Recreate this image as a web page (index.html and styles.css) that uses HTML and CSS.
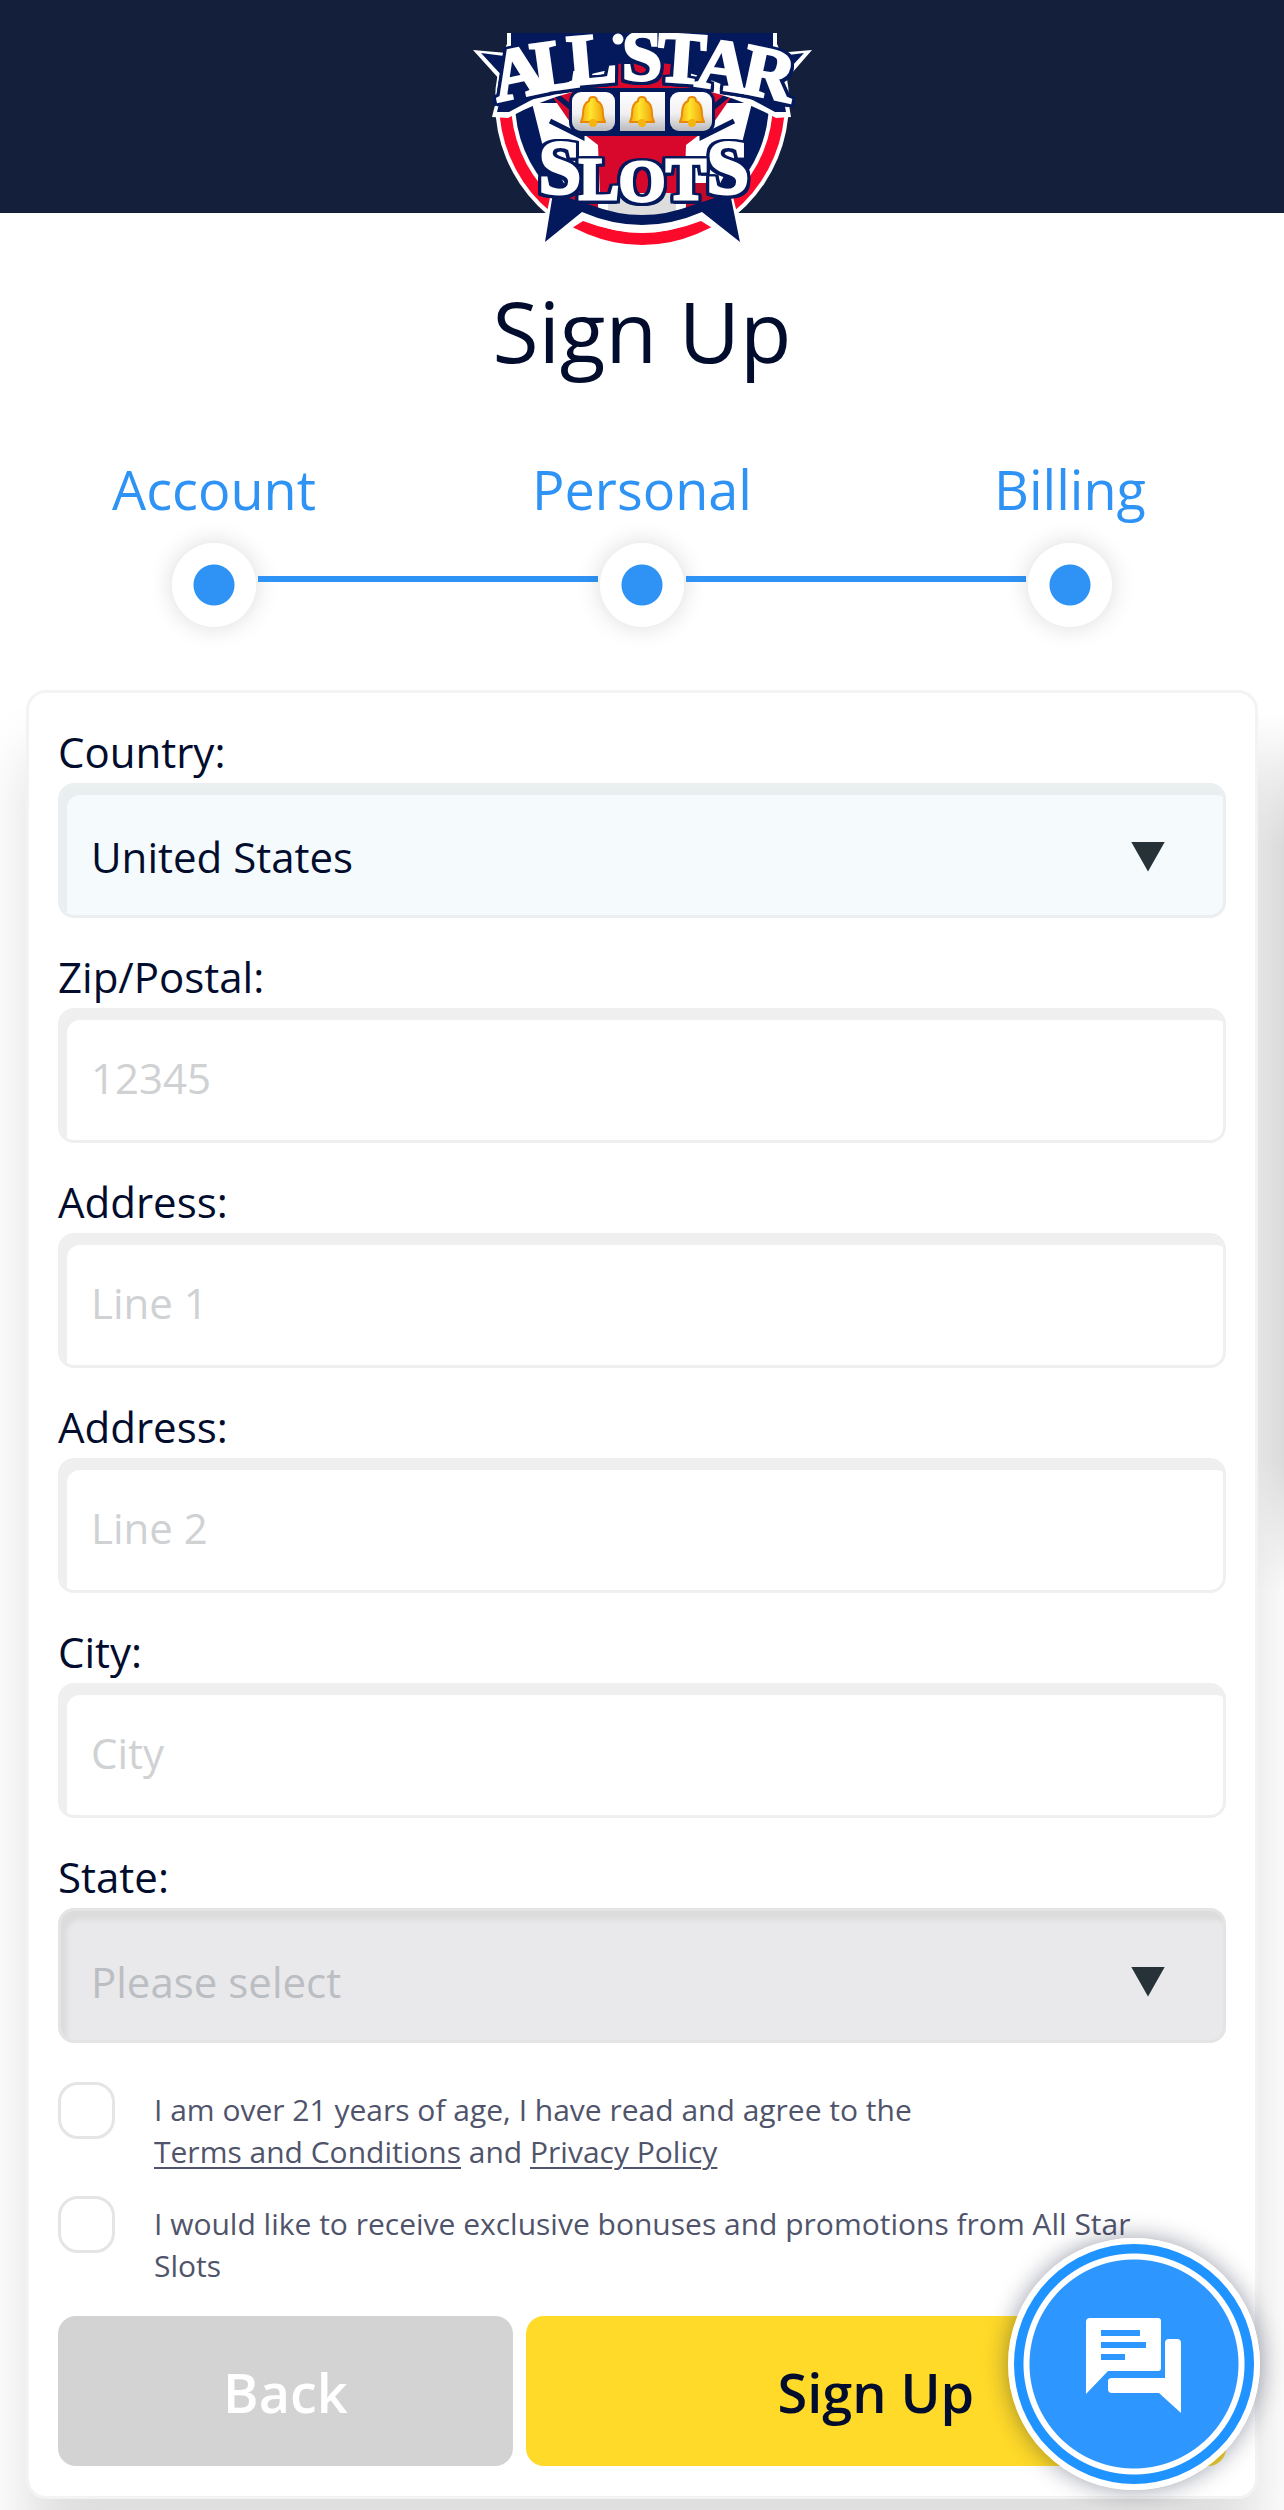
FILE: index.html
```html
<!DOCTYPE html>
<html lang="en">
<head>
<meta charset="utf-8">
<meta name="viewport" content="width=device-width, initial-scale=1">
<title>Sign Up - All Star Slots</title>
<link rel="stylesheet" href="styles.css">
</head>
<body>
<header class="topbar">
  <a class="logo" href="#" aria-label="All Star Slots">
    <svg viewBox="0 0 344 218" width="344" height="218">
      <defs>
        <linearGradient id="reel" x1="0" y1="0" x2="0" y2="1"><stop offset="0" stop-color="#fff"/><stop offset=".55" stop-color="#f1f1f3"/><stop offset="1" stop-color="#b9b9bd"/></linearGradient>
        <linearGradient id="gold" x1="0" y1="0" x2="1" y2="0"><stop offset="0" stop-color="#f6a80c"/><stop offset=".4" stop-color="#ffe62e"/><stop offset="1" stop-color="#f09a08"/></linearGradient>
        <g id="bell"><path d="M0-16c3 0 4 2 4 4 5 2 6 7 6 13 0 5 2 6 2 8H-12c0-2 2-3 2-8 0-6 1-11 6-13 0-2 1-4 4-4z" fill="url(#gold)" stroke="#e8890a" stroke-width="2"/><circle cy="10" r="4" fill="#f5b50e"/></g>
      </defs>
      <circle cx="172" cy="69" r="147" fill="#fff"/>
      <circle cx="172" cy="69" r="143" fill="#fb0a2c"/>
      <circle cx="172" cy="69" r="131" fill="#fff"/>
      <circle cx="172" cy="69" r="127" fill="#04195c"/>
      <path d="M62 70L72 110 108 176 172 186 236 176 272 110 282 70z" fill="#fff"/>
      <path d="M80 60L102 92 128 112 130 165H214L216 112 242 92 264 60 226 0H118z" fill="#d8082c"/>
      <path d="M86 62L112 84V104L80 88M258 62L232 84V104L264 88" fill="none" stroke="#04195c" stroke-width="5"/>
      <path d="M96 150H128V182L96 190zM248 150H216V182L248 190z" fill="#c00a2a"/>
      <path d="M138 160H206V184Q172 196 138 184z" fill="#ddd"/>
      <path d="M3 17L37 20V0H307V20L342 17 315 48 321 84 306 85Q242 50 172 50 102 50 38 85L22 84 31 48z" fill="#fff"/>
      <path d="M11 20L41 24V0H303V24L334 20 310 46 316 79 305 79 262 56Q216 34 172 34 128 34 82 56L39 79 27 79 35 46z" fill="#04195c"/>
      <path d="M142 32Q172 26 206 32V56H142z" fill="#d8082c"/>
      <rect x="99" y="55" width="146" height="48" rx="14" fill="#04195c"/>
      <rect x="102" y="59" width="43" height="39" rx="9" fill="url(#reel)"/>
      <rect x="150" y="59" width="45" height="39" fill="url(#reel)"/>
      <rect x="200" y="59" width="42" height="39" rx="9" fill="url(#reel)"/>
      <use href="#bell" x="123" y="80"/><use href="#bell" x="172" y="80"/><use href="#bell" x="222" y="80"/>
      <path d="M81 160L69 216 113 188Q172 211 231 188L276 216 262 160 223 174Q172 192 121 174z" fill="#fff"/>
      <path d="M83 160L75 209 112 179Q172 205 232 179L270 209 260 160 223 172Q172 192 121 172z" fill="#04195c"/>
      <g class="logo-word">
        <text x="53" y="63" transform="rotate(-12 53 63)">A</text><text x="89" y="56" transform="rotate(-8 89 56)">L</text><text x="124" y="50" transform="rotate(-5 124 50)">L</text><text class="dot" x="148" y="22">·</text><text x="172" y="47">S</text><text x="210" y="49" transform="rotate(4 210 49)">T</text><text x="250" y="56" transform="rotate(8 250 56)">A</text><text x="294" y="64" transform="rotate(12 294 64)">R</text>
      </g>
      <g class="logo-word logo-slots">
        <text class="outer" x="90" y="160">S</text><text x="129" y="166">L</text><text x="172" y="168">O</text><text x="216" y="166">T</text><text class="outer" x="258" y="160">S</text>
      </g>
    </svg>
  </a>
</header>
<main>
  <h1 class="title">Sign Up</h1>
  <ol class="steps">
    <li>Account</li>
    <li>Personal</li>
    <li>Billing</li>
  </ol>
  <form class="card">
    <div class="field">
      <label for="country">Country:</label>
      <div class="picker"><select id="country" class="control"><option>United States</option></select></div>
    </div>
    <div class="field">
      <label for="zip">Zip/Postal:</label>
      <input id="zip" class="control" type="text" placeholder="12345">
    </div>
    <div class="field">
      <label for="line1">Address:</label>
      <input id="line1" class="control" type="text" placeholder="Line 1">
    </div>
    <div class="field">
      <label for="line2">Address:</label>
      <input id="line2" class="control" type="text" placeholder="Line 2">
    </div>
    <div class="field">
      <label for="city">City:</label>
      <input id="city" class="control" type="text" placeholder="City">
    </div>
    <div class="field">
      <label for="state">State:</label>
      <div class="picker"><select id="state" class="control empty"><option>Please select</option></select></div>
    </div>
    <div class="consent">
      <input type="checkbox" id="terms">
      <label for="terms">I am over 21 years of age, I have read and agree to the<br><a href="#">Terms and Conditions</a> and <a href="#">Privacy Policy</a></label>
    </div>
    <div class="consent">
      <input type="checkbox" id="promos">
      <label for="promos">I would like to receive exclusive bonuses and promotions from All Star Slots</label>
    </div>
    <div class="actions">
      <button type="button" class="back">Back</button>
      <button type="submit" class="submit">Sign Up</button>
    </div>
  </form>
</main>
<button type="button" class="chat" aria-label="Chat">
  <svg viewBox="0 0 96 96" width="96" height="96">
    <path d="M4 0H72Q75 0 75 3V50Q75 53 72 53H22L0 76V4Q0 0 4 0z" fill="#fff"/>
    <path d="M15 12H54V18H15zM15 24H60V30H15zM15 36H39V42H15z" fill="#2e97ff"/>
    <path d="M83 21H91Q95 21 95 25V95L73 75H26Q22 75 22 71V63Q22 60 26 60H79V25Q79 21 83 21z" fill="#fff"/>
  </svg>
</button>
</body>
</html>
```
FILE: styles.css
```css
* {
  box-sizing: border-box;
}

body {
  margin: 0;
  background: #fff;
  color: #020d2e;
  font-family: "Open Sans", sans-serif;
}

.topbar {
  display: flex;
  justify-content: center;
  height: 213px;
  padding-top: 33px;
  background: #141f3b;
}

.logo {
  position: relative;
  z-index: 1;
  height: 218px;
}

.logo svg {
  display: block;
}

.logo-word {
  font: bold 72px "Liberation Serif", serif;
  fill: #fff;
  stroke: #fff;
  stroke-width: 3px;
  text-anchor: middle;
  filter: drop-shadow(3px 0 #04195c) drop-shadow(-3px 0 #04195c) drop-shadow(0 3px #04195c) drop-shadow(0 -2px #04195c);
}

.logo-word .dot {
  font-size: 48px;
}

.logo-slots {
  font-size: 60px;
}

.logo-slots .outer {
  font-size: 76px;
}

main {
  position: relative;
  padding-bottom: 11px;
  overflow: hidden;
}

/* Soft shade along the right edge of the window */
main::before {
  content: "";
  position: absolute;
  top: 500px;
  right: 0;
  width: 26px;
  height: 880px;
  background: linear-gradient(to left, rgba(0, 0, 0, 0.12), rgba(0, 0, 0, 0.04));
  mask-image: linear-gradient(transparent, #000 15%, #000 85%, transparent);
}

.title {
  margin: 61px 0 0;
  font-size: 84px;
  font-weight: 400;
  line-height: 114px;
  text-align: center;
}

.steps {
  display: grid;
  grid-template-columns: repeat(3, 1fr);
  margin: 64px 0 0;
  padding: 0;
  list-style: none;
  color: #2e93f5;
  font-size: 54px;
  line-height: 74px;
}

.steps li {
  position: relative;
  display: flex;
  flex-direction: column;
  align-items: center;
  gap: 17px;
}

.steps li::after {
  content: "";
  width: 84px;
  height: 84px;
  border-radius: 50%;
  background: radial-gradient(circle, #2e93f5 20px, #fff 21px);
  box-shadow: 0 0 24px rgba(0, 0, 0, 0.15);
}

.steps li:not(:last-child)::before {
  content: "";
  position: absolute;
  bottom: 45px;
  left: calc(50% + 44px);
  width: calc(100% - 88px);
  height: 6px;
  background: #2e93f5;
}

.card {
  position: relative;
  margin: 63px 26px 0;
  padding: 31px 29px 30px;
  border: 3px solid #f3f3f3;
  border-radius: 20px;
  background: #fff;
  box-shadow: 0 60px 60px rgba(0, 0, 0, 0.13);
}

.field {
  margin-bottom: 31px;
  font-size: 42px;
}

.field label {
  display: block;
  margin-bottom: 3px;
  line-height: 56px;
}

.control {
  appearance: none;
  display: block;
  width: 100%;
  height: 135px;
  margin: 0;
  padding: 7px 30px 3px;
  border: 3px solid #efefef;
  border-radius: 16px;
  background: #fff;
  box-shadow: inset 6px 9px #efefef;
  color: inherit;
  font: inherit;
}

.control::placeholder {
  color: #cfd1d3;
  opacity: 1;
}

.picker {
  display: grid;
  grid-template-columns: 1fr 95px;
  align-items: center;
}

.picker .control {
  grid-area: 1 / 1 / 2 / 3;
  padding-top: 14px;
  border-color: #ebeff1;
  background: #f5fafd;
  box-shadow: inset 6px 9px #e9eeef;
}

.picker .empty {
  border-color: #e4e4e5;
  background: #e9e9eb;
  box-shadow: inset 6px 9px 4px #dcdcdd;
  color: #bbbec2;
}

.picker::after {
  content: "";
  grid-area: 1 / 2;
  z-index: 1;
  width: 34px;
  height: 30px;
  margin-top: 12px;
  background: #263238;
  clip-path: polygon(0 0, 100% 0, 50% 100%);
  pointer-events: none;
}

.consent {
  display: grid;
  grid-template-columns: 57px 1fr;
  column-gap: 39px;
  align-items: start;
  margin-bottom: 23px;
  color: #50546b;
  font-size: 30px;
  line-height: 42px;
}

.field + .consent {
  margin-top: 39px;
}

.consent label {
  padding-right: 80px;
  margin-top: 7px;
}

.consent input {
  appearance: none;
  width: 57px;
  height: 57px;
  margin: 0;
  border: 3px solid #e5e5e5;
  border-radius: 20px;
  background: #fff;
}

.consent a {
  color: inherit;
  text-underline-offset: 4px;
  text-decoration-thickness: 2px;
}

.actions {
  display: grid;
  grid-template-columns: 454fr 699fr;
  column-gap: 13px;
  margin-top: 29px;
}

.actions button {
  height: 150px;
  padding: 2px 0 0;
  border: 0;
  border-radius: 18px;
  font: 600 54px "Open Sans", sans-serif;
}

.actions .back {
  background: #d3d3d3;
  color: #fff;
}

.actions .submit {
  background: #ffda29;
  color: #020d2e;
}

.chat {
  position: fixed;
  right: 24px;
  bottom: 20px;
  display: grid;
  place-items: center;
  width: 252px;
  height: 252px;
  padding: 4px 0 0;
  border: 6px solid #fff;
  border-radius: 50%;
  background: radial-gradient(circle, #2e97ff 104px, #fff 105px, #fff 110px, #1f93ff 111px);
  box-shadow: 0 0 24px rgba(2, 13, 46, 0.4);
}
```
